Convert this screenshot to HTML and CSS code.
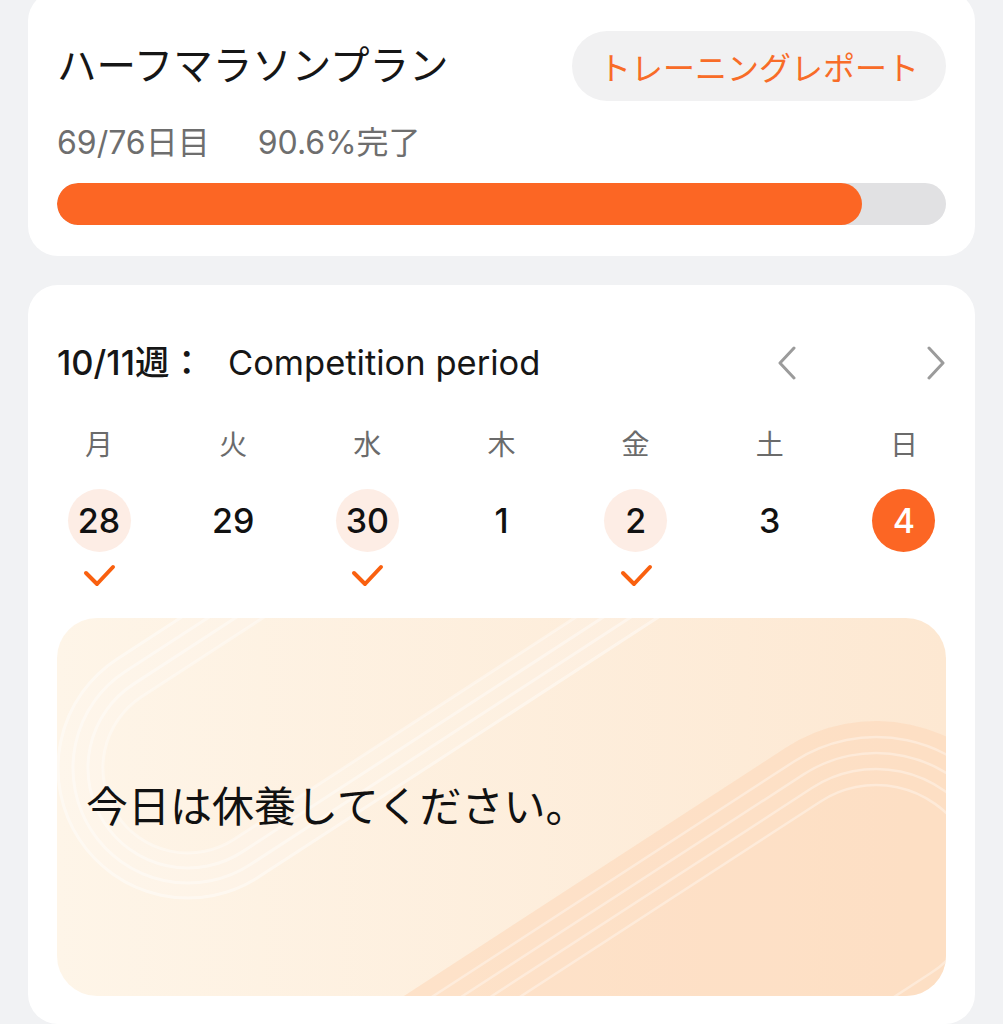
FILE: index.html
```html
<!DOCTYPE html>
<html lang="ja">
	<head>
		<meta charset="utf-8">
		<title>ハーフマラソンプラン</title>
		<link rel="stylesheet" href="styles.css">
	</head>
	<body>

		<main class="page">

		<!--
			Plan summary card
		-->

			<section class="card plan-card">
				<div class="plan-head">
					<h1 class="plan-title">ハーフマラソンプラン</h1>
					<button class="report-btn" type="button">トレーニングレポート</button>
				</div>
				<p class="plan-meta"><span class="meta-day">69/76日目</span><span>90.6%完了</span></p>
				<div class="progress">
					<div class="progress-fill" style="width: 90.6%"></div>
				</div>
			</section>

		<!--
			Week calendar card
		-->

			<section class="card week-card">
				<div class="week-head">
					<h2 class="week-title"><span class="week-no">10/11週：</span>Competition period</h2>
					<div class="week-nav">
						<svg class="chev" viewBox="0 0 20 34" aria-hidden="true"><polyline points="17,2 3,17 17,32"/></svg>
						<svg class="chev" viewBox="0 0 20 34" aria-hidden="true"><polyline points="3,2 17,17 3,32"/></svg>
					</div>
				</div>

				<div class="days">
					<div class="day">
						<span class="day-name">月</span>
						<span class="day-num done">28</span>
						<svg class="tick" viewBox="0 0 34 24" aria-hidden="true"><polyline points="4,9 15,20 31,3"/></svg>
					</div>
					<div class="day">
						<span class="day-name">火</span>
						<span class="day-num">29</span>
						<span class="tick"></span>
					</div>
					<div class="day">
						<span class="day-name">水</span>
						<span class="day-num done">30</span>
						<svg class="tick" viewBox="0 0 34 24" aria-hidden="true"><polyline points="4,9 15,20 31,3"/></svg>
					</div>
					<div class="day">
						<span class="day-name">木</span>
						<span class="day-num">1</span>
						<span class="tick"></span>
					</div>
					<div class="day">
						<span class="day-name">金</span>
						<span class="day-num done">2</span>
						<svg class="tick" viewBox="0 0 34 24" aria-hidden="true"><polyline points="4,9 15,20 31,3"/></svg>
					</div>
					<div class="day">
						<span class="day-name">土</span>
						<span class="day-num">3</span>
						<span class="tick"></span>
					</div>
					<div class="day">
						<span class="day-name">日</span>
						<span class="day-num today">4</span>
						<span class="tick"></span>
					</div>
				</div>

		<!--
			Today's workout panel, running-track lines drawn behind the text
		-->

				<div class="rest">
					<svg class="rest-art" viewBox="0 0 890 378" preserveAspectRatio="none" aria-hidden="true">
						<defs>
							<linearGradient id="restBg" x1="0" y1="0" x2="1" y2="0">
								<stop offset="0" stop-color="#fef5e8"/>
								<stop offset="1" stop-color="#fde8d2"/>
							</linearGradient>
						</defs>
						<rect width="890" height="378" fill="url(#restBg)"/>
						<g transform="rotate(-33 131 150)" fill="none" stroke="#fff">
							<rect x="24" y="43" width="1200" height="214" rx="107" stroke-width="44" stroke-opacity="0.14"/>
							<rect x="1" y="20" width="1200" height="260" rx="130" stroke-width="3" stroke-opacity="0.45"/>
							<rect x="16" y="35" width="1200" height="230" rx="115" stroke-width="3" stroke-opacity="0.4"/>
							<rect x="31" y="50" width="1200" height="200" rx="100" stroke-width="3" stroke-opacity="0.4"/>
							<rect x="46" y="65" width="1200" height="170" rx="85" stroke-width="3" stroke-opacity="0.35"/>
						</g>
						<g transform="rotate(-33 820 269)">
							<rect x="-580" y="103" width="1566" height="332" rx="166" fill="#fdd8ba" fill-opacity="0.6"/>
							<g fill="none" stroke="#fff" stroke-width="2.5" stroke-opacity="0.35">
								<rect x="-580" y="119" width="1550" height="300" rx="150"/>
								<rect x="-580" y="135" width="1534" height="268" rx="134"/>
								<rect x="-580" y="151" width="1518" height="236" rx="118"/>
								<rect x="-580" y="167" width="1502" height="204" rx="102"/>
							</g>
						</g>
					</svg>
					<p class="rest-text">今日は休養してください。</p>
				</div>
			</section>

		</main>

	</body>
</html>
```

FILE: styles.css
```css
/*
	page background and base font
*/

body {
	margin: 0;
	background-color: #f1f2f4;
	font-family: "Inter", "Noto Sans CJK JP", sans-serif;
	color: #161616;
}

.page {
	padding: 0 28px;
}

/*
	shared white card
*/

.card {
	background-color: #fff;
	border-radius: 30px;
	padding: 0 29px;
}

/*
	plan summary card, its top runs above the screen edge
*/

.plan-card {
	margin-top: -9px;
	padding-top: 40px;
	padding-bottom: 31px;
}

.plan-head {
	display: flex;
	justify-content: space-between;
	align-items: center;
}

.plan-title {
	margin: 0;
	font-size: 39.5px;
	font-weight: 400;
	line-height: 48px;
}

.report-btn {
	height: 70px;
	padding: 0 27px;
	border: none;
	border-radius: 35px;
	background-color: #f1f1f2;
	color: #f86c28;
	font-family: inherit;
	font-size: 32px;
}

.plan-meta {
	margin: 22px 0 0;
	font-size: 32px;
	line-height: 40px;
	color: #6e6e6e;
}

.meta-day {
	margin-right: 48px;
}

/*
	progress bar
*/

.progress {
	margin-top: 20px;
	height: 42px;
	border-radius: 21px;
	background-color: #e1e1e3;
	overflow: hidden;
}

.progress-fill {
	height: 100%;
	border-radius: 21px;
	background-color: #fc6624;
}

/*
	week calendar card
*/

.week-card {
	margin-top: 29px;
	padding-top: 58px;
	padding-bottom: 28px;
}

.week-head {
	display: flex;
	justify-content: space-between;
	align-items: center;
	height: 40px;
}

.week-title {
	margin: 0;
	font-size: 34.5px;
	font-weight: 400;
	line-height: 40px;
}

.week-no {
	font-weight: 500;
	margin-right: 24px;
}

.week-nav {
	display: flex;
	gap: 129px;
}

.chev {
	width: 20px;
	height: 34px;
	fill: none;
	stroke: #9b9b9b;
	stroke-width: 3;
	stroke-linecap: round;
	stroke-linejoin: round;
}

/*
	weekday columns
*/

.days {
	display: flex;
	justify-content: space-between;
	margin-top: 44px;
}

.day {
	width: 84px;
	display: flex;
	flex-direction: column;
	align-items: center;
}

.day-name {
	font-size: 28px;
	line-height: 36px;
	color: #6b6b6b;
}

.day-num {
	margin-top: 26px;
	width: 63px;
	height: 63px;
	border-radius: 50%;
	display: flex;
	justify-content: center;
	align-items: center;
	font-size: 34px;
	font-weight: 500;
	color: #111;
}

.day-num.done {
	background-color: #fdede5;
}

.day-num.today {
	background-color: #fc6624;
	color: #fff;
}

.tick {
	margin-top: 12px;
	width: 34px;
	height: 24px;
	fill: none;
	stroke: #f9600f;
	stroke-width: 4;
	stroke-linecap: round;
	stroke-linejoin: round;
}

/*
	rest day panel
*/

.rest {
	position: relative;
	margin-top: 30px;
	height: 378px;
	border-radius: 40px;
	overflow: hidden;
	display: flex;
	align-items: center;
}

.rest-art {
	position: absolute;
	top: 0;
	left: 0;
	width: 100%;
	height: 100%;
}

.rest-text {
	position: relative;
	margin: 0 0 0 29px;
	font-size: 42px;
	line-height: 50px;
	color: #111;
}
```
